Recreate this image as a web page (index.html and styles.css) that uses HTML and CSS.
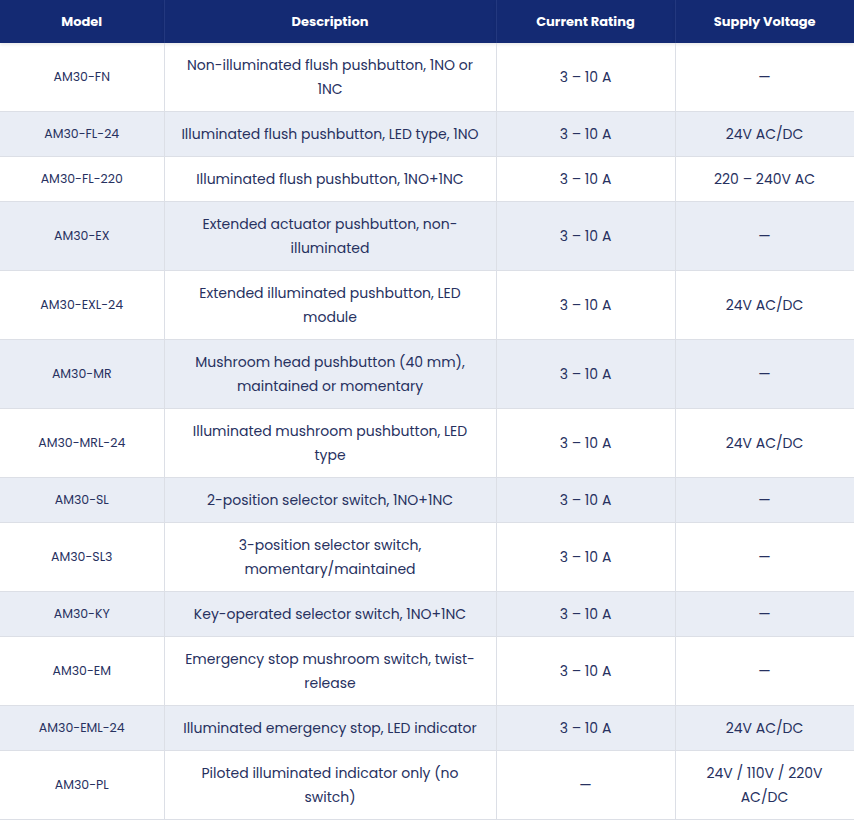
FILE: index.html
```html
<!DOCTYPE html>
<html lang="en">
<head>
<meta charset="utf-8">
<title>AM30 Pushbutton Models</title>
<link rel="stylesheet" href="styles.css">
</head>
<body>
<table class="spec">
  <colgroup>
    <col class="c-model">
    <col class="c-desc">
    <col class="c-cur">
    <col class="c-volt">
  </colgroup>
  <thead>
    <tr><th>Model</th><th>Description</th><th>Current Rating</th><th>Supply Voltage</th></tr>
  </thead>
  <tbody>
    <tr><td class="model">AM30-FN</td><td>Non-illuminated flush pushbutton, 1NO or 1NC</td><td>3 – 10 A</td><td>—</td></tr>
    <tr><td class="model">AM30-FL-24</td><td>Illuminated flush pushbutton, LED type, 1NO</td><td>3 – 10 A</td><td>24V AC/DC</td></tr>
    <tr><td class="model">AM30-FL-220</td><td>Illuminated flush pushbutton, 1NO+1NC</td><td>3 – 10 A</td><td>220 – 240V AC</td></tr>
    <tr><td class="model">AM30-EX</td><td>Extended actuator pushbutton, non-illuminated</td><td>3 – 10 A</td><td>—</td></tr>
    <tr><td class="model">AM30-EXL-24</td><td>Extended illuminated pushbutton, LED module</td><td>3 – 10 A</td><td>24V AC/DC</td></tr>
    <tr><td class="model">AM30-MR</td><td>Mushroom head pushbutton (40 mm), maintained or momentary</td><td>3 – 10 A</td><td>—</td></tr>
    <tr><td class="model">AM30-MRL-24</td><td>Illuminated mushroom pushbutton, LED type</td><td>3 – 10 A</td><td>24V AC/DC</td></tr>
    <tr><td class="model">AM30-SL</td><td>2-position selector switch, 1NO+1NC</td><td>3 – 10 A</td><td>—</td></tr>
    <tr><td class="model">AM30-SL3</td><td>3-position selector switch, momentary/maintained</td><td>3 – 10 A</td><td>—</td></tr>
    <tr><td class="model">AM30-KY</td><td>Key-operated selector switch, 1NO+1NC</td><td>3 – 10 A</td><td>—</td></tr>
    <tr><td class="model">AM30-EM</td><td>Emergency stop mushroom switch, twist-release</td><td>3 – 10 A</td><td>—</td></tr>
    <tr><td class="model">AM30-EML-24</td><td>Illuminated emergency stop, LED indicator</td><td>3 – 10 A</td><td>24V AC/DC</td></tr>
    <tr><td class="model">AM30-PL</td><td>Piloted illuminated indicator only (no switch)</td><td>—</td><td>24V / 110V / 220V AC/DC</td></tr>
  </tbody>
</table>
</body>
</html>
```
FILE: styles.css
```css
html, body {
  margin: 0;
  padding: 0;
  background: #ffffff;
}
body {
  font-family: "Poppins", "Open Sans", "Noto Sans", sans-serif;
  color: #27315f;
}
.spec {
  width: 854px;
  border-collapse: collapse;
  table-layout: fixed;
}
.c-model { width: 164px; }
.c-desc { width: 332px; }
.c-cur { width: 179px; }
.c-volt { width: 179px; }
.spec thead th {
  background: #142a73;
  color: #ffffff;
  font-weight: 700;
  font-size: 13px;
  height: 43px;
  padding: 0 8px;
  text-align: center;
  border-right: 1px solid #23387f;
  box-shadow: 0 2px 3px rgba(0,0,0,0.08);
}
.spec thead th:last-child { border-right: none; }
.spec td {
  padding: 10px 16px;
  font-size: 14px;
  line-height: 24px;
  text-align: center;
  vertical-align: middle;
  border-bottom: 1px solid #dcdfe6;
  border-right: 1px solid #dcdfe6;
}
.spec td:first-child { border-left: none; }
.spec td.model { font-size: 12.5px; }
.spec tbody tr:nth-child(even) td { background: #e9edf5; }
```
